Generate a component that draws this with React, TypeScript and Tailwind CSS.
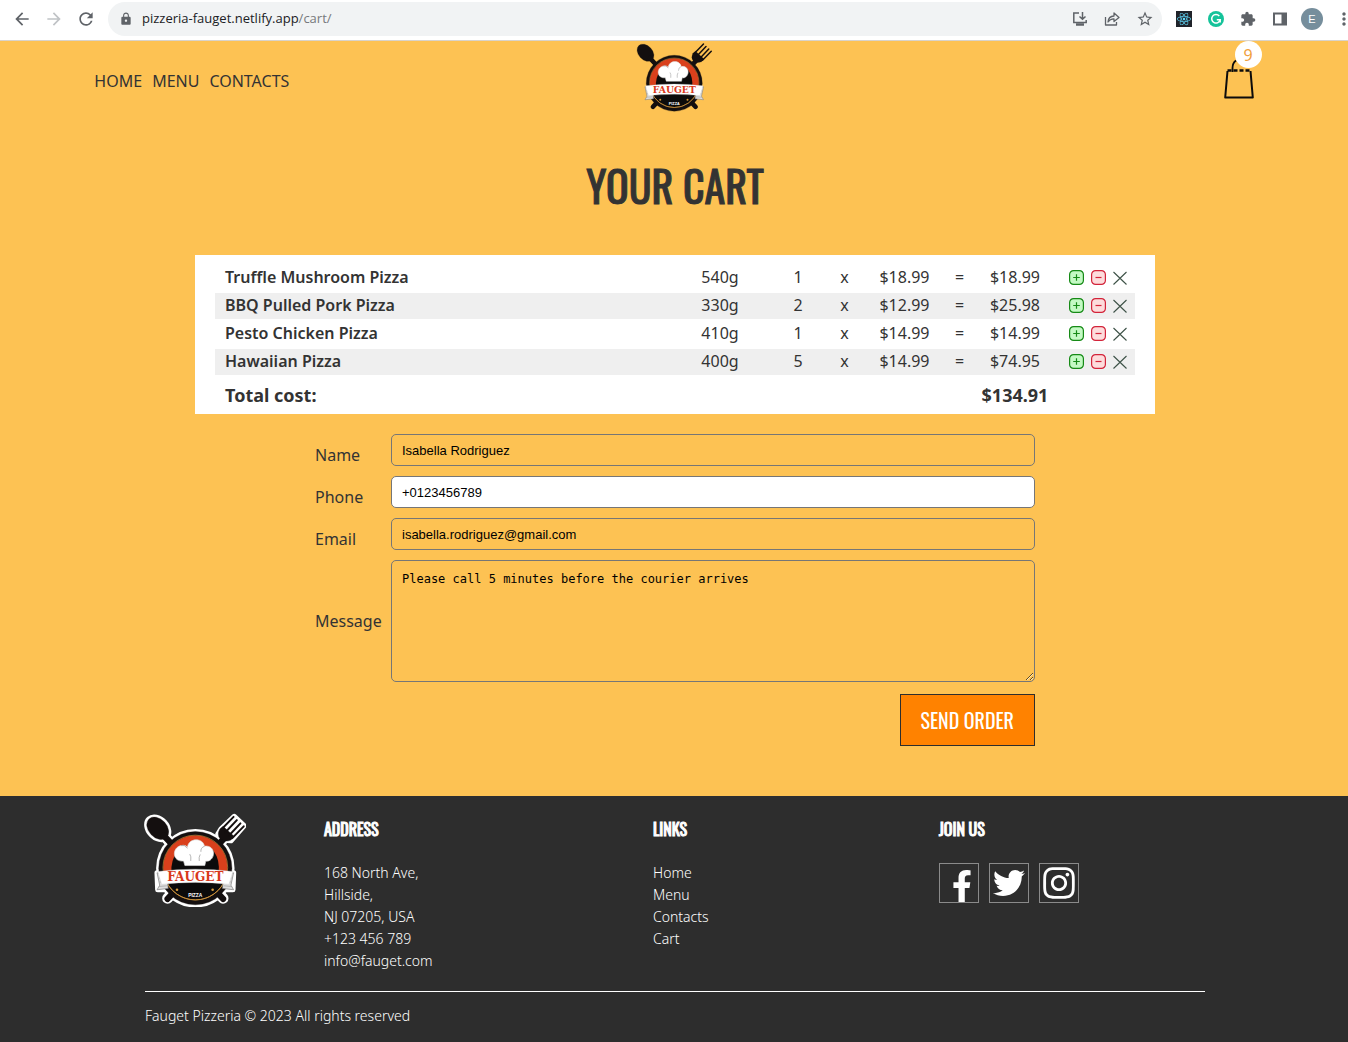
import React from "react";
import { MdArrowBack, MdArrowForward, MdExtension, MdLock, MdMoreVert, MdRefresh, MdStarBorder } from "react-icons/md";
import { FaFacebookF, FaInstagram, FaReact, FaTwitter } from "react-icons/fa";

const items = [
  { name: "Truffle Mushroom Pizza", weight: "540g", qty: 1, price: "$18.99", sum: "$18.99" },
  { name: "BBQ Pulled Pork Pizza", weight: "330g", qty: 2, price: "$12.99", sum: "$25.98" },
  { name: "Pesto Chicken Pizza", weight: "410g", qty: 1, price: "$14.99", sum: "$14.99" },
  { name: "Hawaiian Pizza", weight: "400g", qty: 5, price: "$14.99", sum: "$74.95" },
];

function Logo({ className, outlined = false }: { className: string; outlined?: boolean }) {
  return (
    <svg viewBox="38 36 312 286" className={className} role="img" aria-label="Fauget Pizza">
      {outlined && (
        <g fill="#fff" stroke="#fff" strokeWidth="16" strokeLinejoin="round" strokeLinecap="round">
          <ellipse cx="80" cy="82" rx="28" ry="39" transform="rotate(-43 80 82)" />
          <path d="M98 104 L280 296" strokeWidth="33" />
          <path d="M284 112 L110 296" strokeWidth="33" />
          <circle cx="195" cy="204" r="112" />
          <path d="M282 118 L264 100 L274 84 L314 46 L344 74 L304 120 Z" />
          <path d="M78 218 L312 218 L310 270 L80 270 Z" />
        </g>
      )}
      <g fill="#140f0f" stroke="#140f0f">
        <ellipse cx="80" cy="82" rx="28" ry="39" transform="rotate(-43 80 82)" />
        <path d="M98 104 L280 298" strokeWidth="19" strokeLinecap="round" />
        <path d="M284 112 L110 298" strokeWidth="19" strokeLinecap="round" />
        <circle cx="195" cy="204" r="112" />
        <path d="M270 84 Q260 102 271 114 Q286 126 304 118 L314 107 L280 76 Z" />
        <path d="M276 84 L312 47 M287 94 L322 57 M298 104 L333 67 M308 112 L343 76" strokeWidth="6" strokeLinecap="round" />
      </g>
      <circle cx="195" cy="202" r="98" fill="#d9401c" />
      <path d="M102 234 A98 98 0 0 0 288 234 Z" fill="#0c0b0b" stroke="#d69a3c" strokeWidth="3" />
      <circle cx="195" cy="202" r="99" fill="none" stroke="#c98f3a" strokeWidth="2" />
      <path d="M122 222 Q118 180 142 150 L250 150 Q272 180 266 222 Z" fill="#0c0b0b" />
      <path d="M163 196 L159 182 C124 186 122 142 151 135 C162 132 168 136 171 140 C174 110 219 110 223 137 C250 132 260 164 241 179 C236 183 230 183 227 182 L224 196 Z" fill="#fff" stroke="#dddddd" strokeWidth="2" />
      <path d="M151 135 Q162 131 171 143 M223 137 Q211 141 212 154 M181 182 Q183 167 178 161 M207 182 Q205 170 210 162" fill="none" stroke="#8f8f8f" strokeWidth="2" />
      <path d="M78 218 L108 226 L112 266 L78 270 L86 256 Z M312 218 L282 226 L278 266 L312 270 L304 256 Z" fill="#dedede" stroke="#777777" strokeWidth="2" />
      <path d="M84 234 L106 238 M86 246 L107 248 M84 260 L108 258 M306 234 L284 238 M304 246 L284 248 M306 260 L282 258" stroke="#999999" strokeWidth="2" />
      <path d="M80 214 Q195 200 310 214 L298 253 Q195 242 92 253 Z" fill="#fff" stroke="#cccccc" strokeWidth="1" />
      <text x="195" y="242" textAnchor="middle" fontFamily="'DejaVu Serif', serif" fontWeight="700" fontSize="37" fill="#d9381a">FAUGET</text>
      <text x="195" y="291" textAnchor="middle" fontFamily="'Liberation Sans', sans-serif" fontWeight="700" fontSize="15" fill="#fff">PIZZA</text>
      <circle cx="139" cy="270" r="4" fill="#d69a3c" />
      <circle cx="248" cy="270" r="4" fill="#d69a3c" />
    </svg>
  );
}

function BrowserBar() {
  return (
    <div className="flex h-[41px] items-center border-b border-[#d9d3cb] bg-white pb-[2px] text-[#5f6368]">
      <div className="flex items-center gap-3 pl-3">
        <button aria-label="Back"><MdArrowBack className="size-5" /></button>
        <button aria-label="Forward" className="text-[#c0c3c6]"><MdArrowForward className="size-5" /></button>
        <button aria-label="Reload"><MdRefresh className="size-5" /></button>
      </div>
      <div className="ml-3 flex h-[34px] flex-1 items-center rounded-full bg-[#f1f3f4] pr-2">
        <MdLock className="ml-[11px] size-[14px]" />
        <div className="ml-[9px] flex-1 font-['Open_Sans',sans-serif] text-[13px] text-[#77797c]">
          <span className="text-[#202124]">pizzeria-fauget.netlify.app</span>/cart/
        </div>
        <div className="flex items-center gap-4">
          <button aria-label="Install app">
            <svg viewBox="0 0 16 16" className="size-4" fill="none" stroke="currentColor" strokeWidth="1.5">
              <path d="M7 2H1.8V11.5H14.2V9M10.5 1V8M7.5 5.5L10.5 8.3L13.5 5.5" />
              <path d="M4 13.5H12" strokeWidth="2.5" />
            </svg>
          </button>
          <button aria-label="Share">
            <svg viewBox="0 0 16 16" className="size-4" fill="none" stroke="currentColor" strokeWidth="1.3" strokeLinejoin="round">
              <path d="M1.5 6V14H12.5V11M4 11C4.3 7 6.5 5.2 10 5V2L15 6.5L10 10.5V7.8C7.3 7.7 5.5 8.7 4 11Z" />
            </svg>
          </button>
          <button aria-label="Bookmark"><MdStarBorder className="size-[18px]" /></button>
        </div>
      </div>
      <div className="ml-[14px] flex items-center gap-4">
        <button aria-label="React tools" className="flex size-4 items-center justify-center bg-[#20232a] text-[#61dafb]"><FaReact className="size-[14px]" /></button>
        <button aria-label="Grammarly">
          <svg viewBox="0 0 16 16" className="size-4">
            <circle cx="8" cy="8" r="8" fill="#15c39a" />
            <path d="M11.3 5A4.3 4.3 0 1 0 12.2 8.8H8.8M12.2 8.8V11.4" fill="none" stroke="#fff" strokeWidth="1.5" />
          </svg>
        </button>
        <button aria-label="Extensions"><MdExtension className="size-4" /></button>
        <button aria-label="Side panel">
          <svg viewBox="0 0 16 16" className="size-4">
            <path d="M1 1.5H15V14.5H1Z M3 3.5V12.5H9.5V3.5Z" fill="currentColor" fillRule="evenodd" />
          </svg>
        </button>
        <button aria-label="Profile" className="-ml-[3px] flex size-[22px] items-center justify-center rounded-full bg-[#768e9c] font-['Liberation_Sans',sans-serif] text-[11px] text-white">E</button>
      </div>
      <button aria-label="More" className="ml-[11px] w-[14px] overflow-hidden"><MdMoreVert className="size-5" /></button>
    </div>
  );
}

function Header() {
  return (
    <header className="grid h-20 grid-cols-3 items-center px-[7%]">
      <nav className="flex gap-[10px] text-base">
        <a href="#home">HOME</a>
        <a href="#menu">MENU</a>
        <a href="#contacts">CONTACTS</a>
      </nav>
      <a href="#home" className="justify-self-center"><Logo className="-mt-2 h-[72px] w-[78px]" /></a>
      <a href="#cart" aria-label="Cart" className="relative justify-self-end">
        <svg viewBox="0 0 30 40" className="-mt-1 h-10 w-[30px]" fill="none" stroke="#0c0b0b">
          <path d="M3.5 12L1.2 38.5H28.8L26.5 12" strokeWidth="2" strokeLinejoin="round" />
          <path d="M3.5 11.5H27" strokeWidth="2.4" strokeDasharray="4 2" />
          <path d="M8.5 13V9C8.5 5 10 3 12 1.5" strokeWidth="1.8" />
        </svg>
        <span className="absolute -top-[22px] left-[11px] flex size-[27px] items-center justify-center rounded-full bg-white text-base text-[#f0a03c]">9</span>
      </a>
    </header>
  );
}

function CartTable() {
  return (
    <section className="mx-auto w-full max-w-[960px] bg-white px-5 pt-2">
      <table className="w-full table-fixed border-separate border-spacing-x-0 border-spacing-y-[2px] text-center text-base leading-6">
        <colgroup>
          <col />
          <col className="w-[90px]" />
          <col className="w-[66px]" />
          <col className="w-[27px]" />
          <col className="w-[93px]" />
          <col className="w-[17px]" />
          <col className="w-[94px]" />
          <col className="w-[73px]" />
        </colgroup>
        <tbody>
          {items.map((item) => (
            <tr key={item.name} className="even:bg-[#efefef]">
              <th scope="row" className="p-0 pb-[2px] pl-[10px] text-left font-semibold">{item.name}</th>
              <td className="p-0 pb-[2px]">{item.weight}</td>
              <td className="p-0 pb-[2px]">{item.qty}</td>
              <td className="p-0 pb-[2px]">x</td>
              <td className="p-0 pb-[2px]">{item.price}</td>
              <td className="p-0 pb-[2px]">=</td>
              <td className="p-0 pb-[2px]">{item.sum}</td>
              <td className="p-0 pb-[2px]">
                <div className="flex items-center justify-end gap-[7px] pt-px pr-2">
                  <button aria-label={"Add one " + item.name}>
                    <svg viewBox="0 0 15 15" className="size-[15px]">
                      <rect x="0.6" y="0.6" width="13.8" height="13.8" rx="4" fill="#c4fac4" stroke="#168a16" strokeWidth="1.2" />
                      <path d="M4.2 7.5H10.8M7.5 4.2V10.8" stroke="#168a16" strokeWidth="1.2" />
                    </svg>
                  </button>
                  <button aria-label={"Remove one " + item.name}>
                    <svg viewBox="0 0 15 15" className="size-[15px]">
                      <rect x="0.6" y="0.6" width="13.8" height="13.8" rx="4" fill="#fddcdc" stroke="#d3243a" strokeWidth="1.2" />
                      <path d="M4.5 7.5H10.5" stroke="#d3243a" strokeWidth="1.2" />
                    </svg>
                  </button>
                  <button aria-label={"Delete " + item.name}>
                    <svg viewBox="0 0 14 14" className="size-[14px]">
                      <path d="M0.5 1L13.5 13.5M13.5 1L0.5 13.5" stroke="#3d5247" strokeWidth="1.1" />
                    </svg>
                  </button>
                </div>
              </td>
            </tr>
          ))}
        </tbody>
        <tfoot>
          <tr className="text-lg leading-[33px]">
            <th scope="row" colSpan={6} className="p-0 pt-[2px] pl-[10px] text-left font-bold">Total cost:</th>
            <td className="p-0 pt-[2px] font-bold">$134.91</td>
            <td className="p-0" />
          </tr>
        </tfoot>
      </table>
    </section>
  );
}

const field = "h-8 w-full rounded-[5px] border border-[#767676] bg-transparent px-[10px] font-['Liberation_Sans',sans-serif] text-[13px] text-black outline-none";
const fieldActive = "h-8 w-full rounded-[5px] border border-[#767676] bg-white px-[10px] font-['Liberation_Sans',sans-serif] text-[13px] text-black outline-none";

function OrderForm() {
  return (
    <form className="mx-auto mt-5 grid w-full max-w-[720px] grid-cols-[66px_1fr] gap-[10px]" onSubmit={(e) => e.preventDefault()}>
      <label htmlFor="name" className="pt-[10px] leading-[22px]">Name</label>
      <input id="name" className={field} defaultValue="Isabella Rodriguez" />
      <label htmlFor="phone" className="pt-[10px] leading-[22px]">Phone</label>
      <input id="phone" className={fieldActive} defaultValue="+0123456789" />
      <label htmlFor="email" className="pt-[10px] leading-[22px]">Email</label>
      <input id="email" type="email" className={field} defaultValue="isabella.rodriguez@gmail.com" />
      <label htmlFor="message" className="self-center">Message</label>
      <textarea
        id="message"
        className="block h-[122px] w-full rounded-[5px] border border-[#767676] bg-transparent px-[10px] py-[10px] font-['DejaVu_Sans_Mono',monospace] text-[12px] leading-4 text-black outline-none"
        defaultValue="Please call 5 minutes before the courier arrives"
      />
      <button type="submit" className="col-start-2 mt-[2px] h-[52px] justify-self-end border border-[#2d2d2d] bg-[#ff8200] px-5 font-['Oswald','Roboto_Condensed',Roboto,sans-serif] text-xl text-white">
        SEND ORDER
      </button>
    </form>
  );
}

function FooterHeading({ children }: { children: React.ReactNode }) {
  return <h2 className="mb-[21px] font-['Oswald','Roboto_Condensed',Roboto,sans-serif] text-base leading-6 font-normal [-webkit-text-stroke:1px_white]">{children}</h2>;
}

const social = "flex size-10 items-center justify-center border border-[#8a8a8a]";

function Footer() {
  return (
    <footer className="flex-1 bg-[#2d2d2d] pr-6 pl-[26px] text-[14px] leading-[22px] font-light text-white">
      <div className="mx-auto max-w-[1060px]">
        <div className="grid grid-cols-[179fr_329fr_286fr_266fr] pt-[17px] pb-[19px]">
          <Logo outlined className="-ml-px h-[94px] w-[102px]" />
          <div className="pt-1">
            <FooterHeading>ADDRESS</FooterHeading>
            <address className="not-italic">
              168 North Ave,<br />Hillside,<br />NJ 07205, USA<br />
              <a href="tel:+123456789">+123 456 789</a><br />
              <a href="mailto:info@fauget.com">info@fauget.com</a>
            </address>
          </div>
          <div className="pt-1">
            <FooterHeading>LINKS</FooterHeading>
            <nav className="flex flex-col items-start">
              <a href="#home">Home</a>
              <a href="#menu">Menu</a>
              <a href="#contacts">Contacts</a>
              <a href="#cart">Cart</a>
            </nav>
          </div>
          <div className="pt-1">
            <FooterHeading>JOIN US</FooterHeading>
            <div className="flex gap-[10px] pt-px">
              <a href="#facebook" aria-label="Facebook" className="flex size-10 items-end justify-center border border-[#8a8a8a] pl-[6px]"><FaFacebookF className="size-8" /></a>
              <a href="#twitter" aria-label="Twitter" className={social}><FaTwitter className="size-8" /></a>
              <a href="#instagram" aria-label="Instagram" className={social}><FaInstagram className="size-9" /></a>
            </div>
          </div>
        </div>
        <div className="border-t border-white py-[13px]">Fauget Pizzeria © 2023 All rights reserved</div>
      </div>
    </footer>
  );
}

export default function App() {
  return (
    <div className="flex min-h-screen flex-col bg-[#fdc253] font-['Noto_Sans',sans-serif] text-[#333333]">
      <BrowserBar />
      <Header />
      <main className="pr-6 pb-[50px] pl-[26px]">
        <h1 className="pt-[34px] pb-10 text-center font-['Oswald','Roboto_Condensed',Roboto,sans-serif] text-[42px] leading-[60px] font-normal [-webkit-text-stroke:1px_#333333]">YOUR CART</h1>
        <CartTable />
        <OrderForm />
      </main>
      <Footer />
    </div>
  );
}
